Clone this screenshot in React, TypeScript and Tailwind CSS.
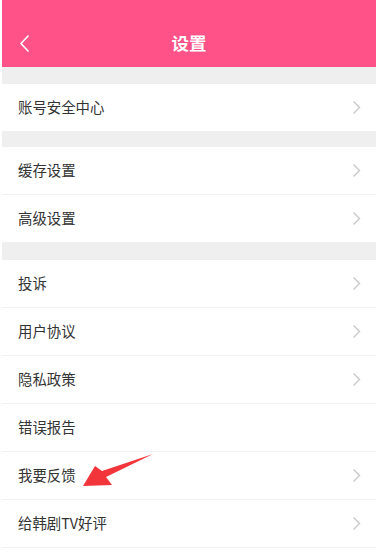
import React from "react";

const groups: { label: string; arrow: boolean }[][] = [
  [{ label: "账号安全中心", arrow: true }],
  [
    { label: "缓存设置", arrow: true },
    { label: "高级设置", arrow: true },
  ],
  [
    { label: "投诉", arrow: true },
    { label: "用户协议", arrow: true },
    { label: "隐私政策", arrow: true },
    { label: "错误报告", arrow: false },
    { label: "我要反馈", arrow: true },
    { label: "给韩剧TV好评", arrow: true },
  ],
];

function Chevron() {
  return (
    <svg width="9" height="15" viewBox="0 0 9 15" fill="none">
      <path d="M1.5 1.5 L7.5 7.5 L1.5 13.5" stroke="#c9c9c9" strokeWidth="1.4" />
    </svg>
  );
}

export default function App() {
  return (
    <div
      className="relative w-[378px] h-[558px] bg-white px-[2px] overflow-hidden"
      style={{ fontFamily: '"Noto Sans CJK SC", "Noto Sans", sans-serif' }}
    >
      {/* header */}
      <div className="h-[67px] bg-[#ff5288] flex items-end pb-[13px] relative">
        <svg className="ml-[16px] mb-[1px]" width="14" height="19" viewBox="0 0 14 19" fill="none">
          <path d="M10.5 1.5 L3 9.5 L10.5 17.5" stroke="#fff" strokeWidth="1.6" />
        </svg>
        <div className="absolute left-0 right-0 bottom-[12px] text-center text-white text-[17.5px] font-bold leading-[24px]">
          设置
        </div>
      </div>

      {groups.map((group, gi) => (
        <div key={gi}>
          <div className={gi === 1 ? "h-[16px] bg-[#efefef]" : "h-[17px] bg-[#efefef]"} />
          {group.map((item) => (
            <div
              key={item.label}
              className={
                gi === 0
                  ? "h-[47px] flex items-center justify-between pl-[16px] pr-[15px]"
                  : "h-[48px] flex items-center justify-between pl-[16px] pr-[15px] border-b border-[#f1f1f1]"
              }
            >
              <span className="text-[14.4px] text-[#333] leading-none">{item.label}</span>
              {item.arrow && <Chevron />}
            </div>
          ))}
        </div>
      ))}

      {/* annotation arrow */}
      <svg className="absolute left-0 top-0 pointer-events-none" width="378" height="558" viewBox="0 0 378 558">
        <polygon points="83,486 95,466 102,471 153,454 106,477 112,485" fill="#f2353a" />
      </svg>
    </div>
  );
}
